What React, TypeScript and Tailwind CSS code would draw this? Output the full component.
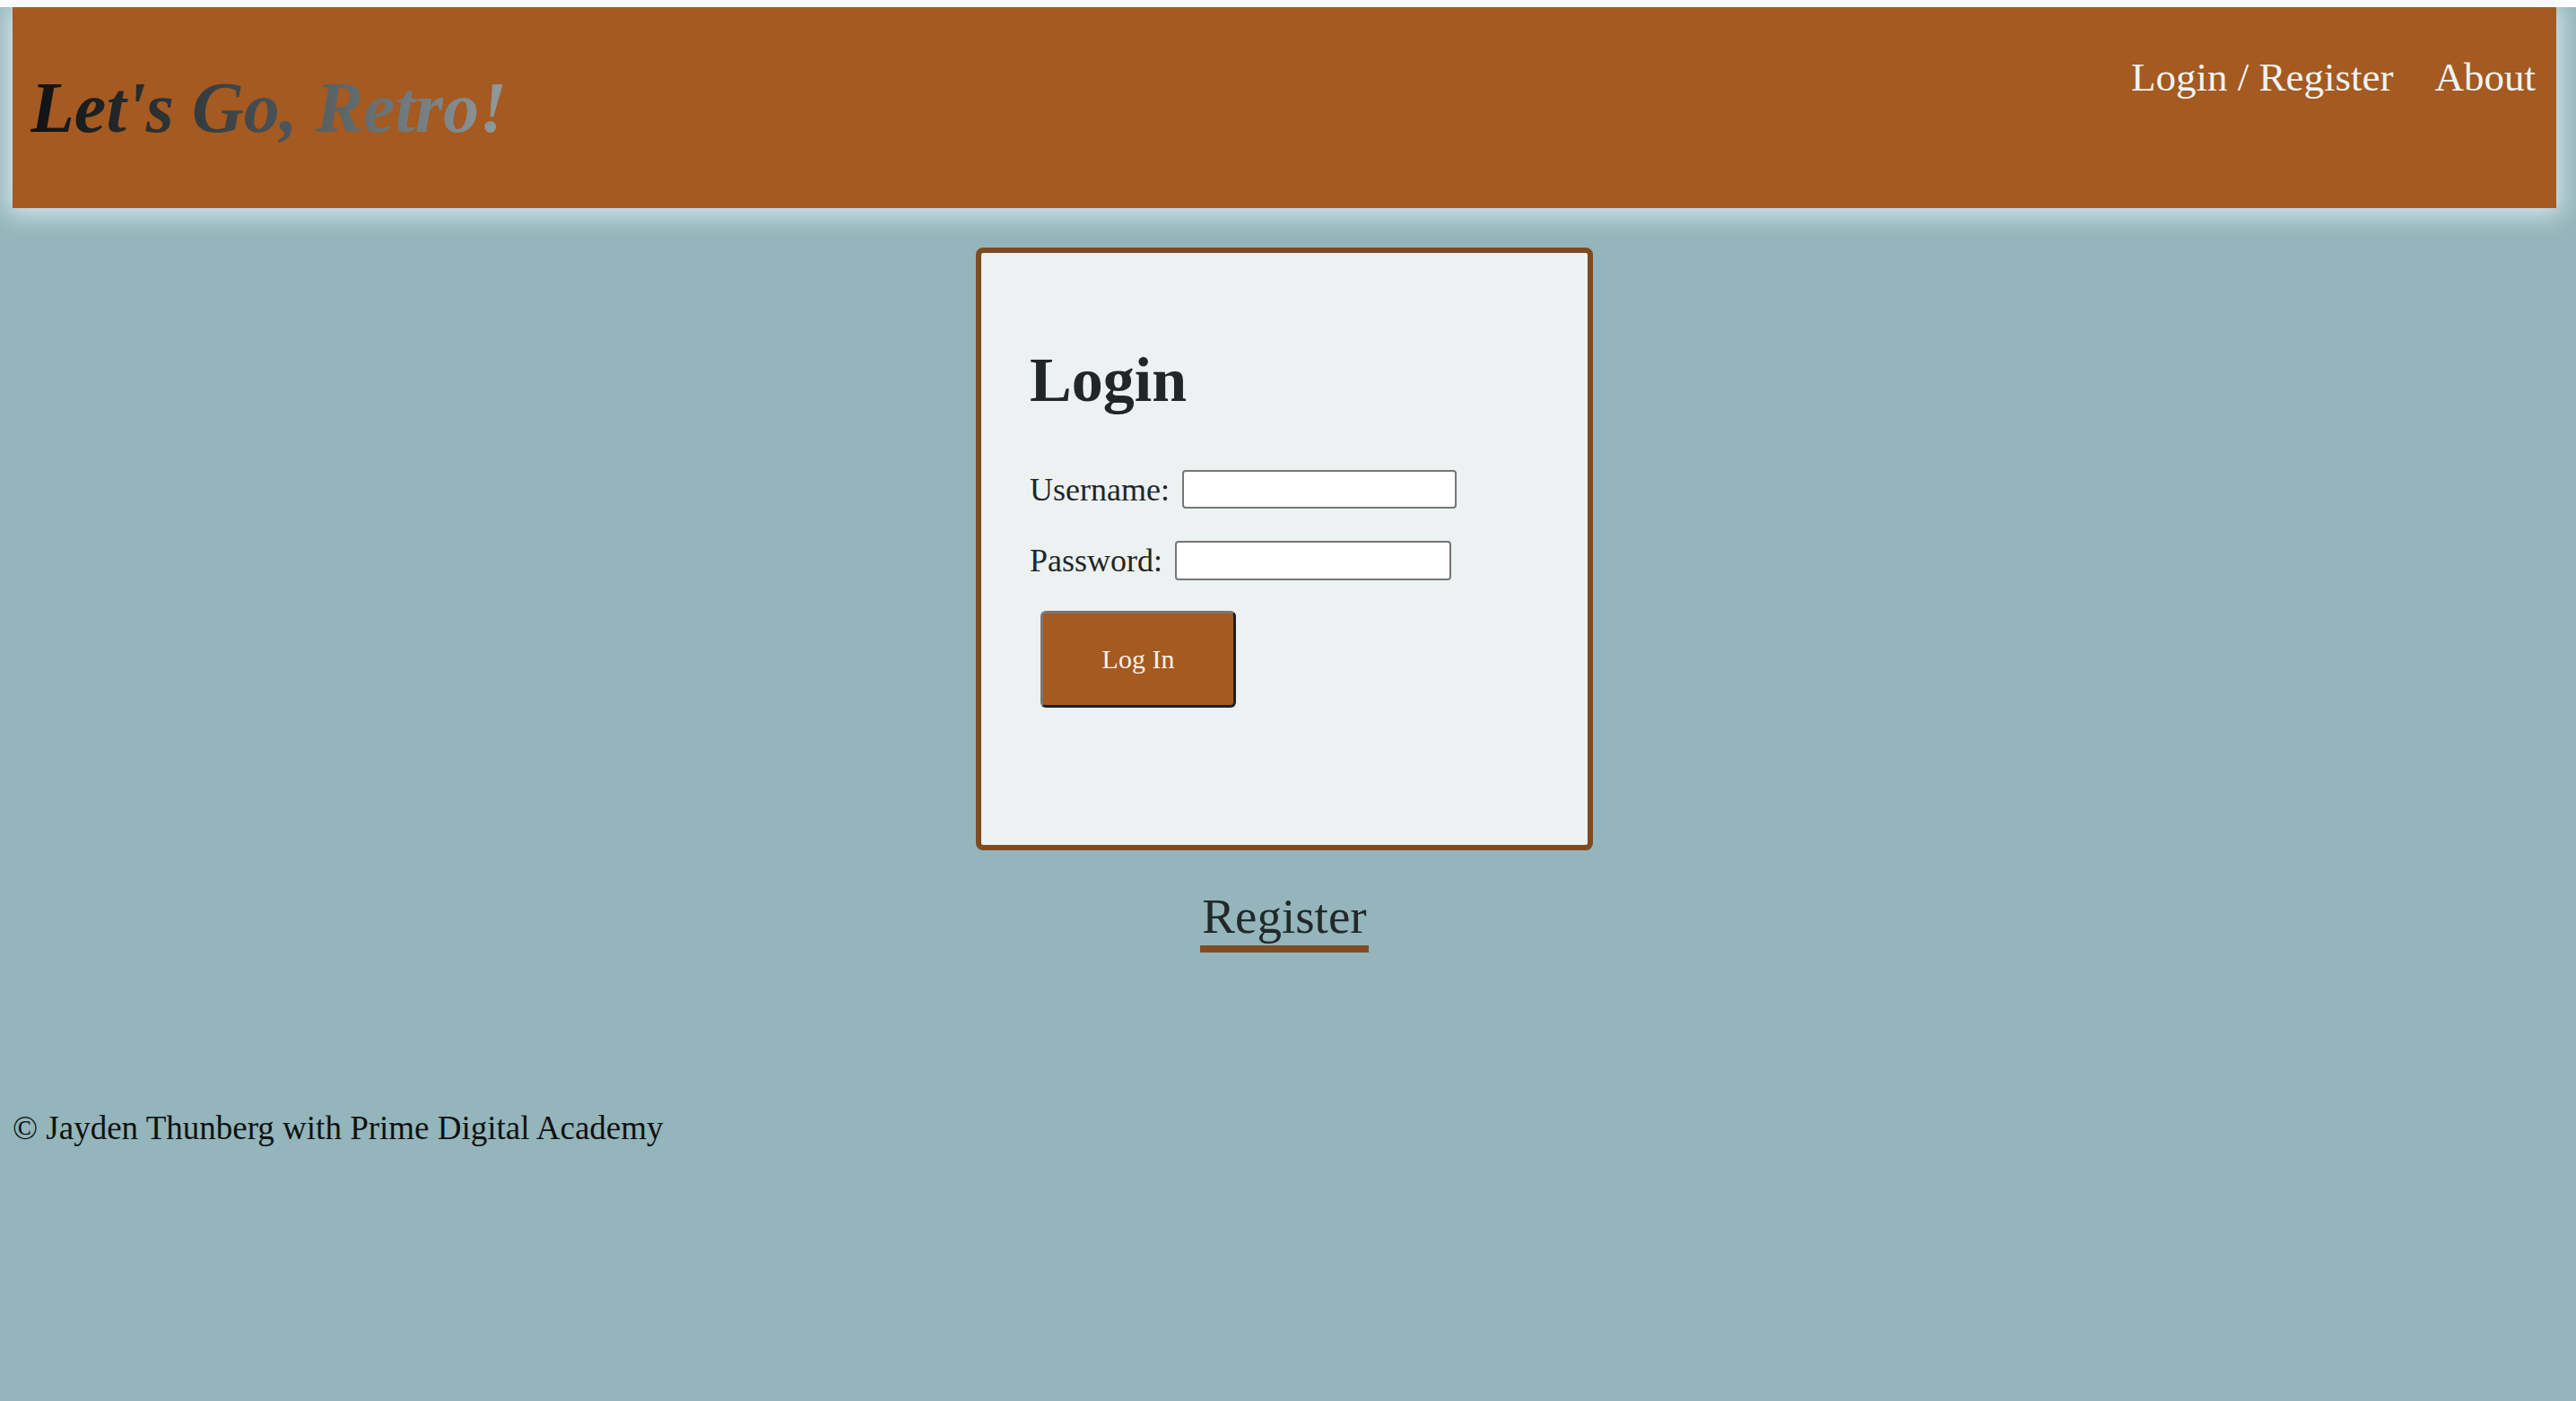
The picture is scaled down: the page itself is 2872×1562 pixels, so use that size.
import { useState } from 'react'

const serif = "font-['Liberation_Serif','Times_New_Roman',serif]"

function Header() {
  return (
    <header className="mt-[8px] ml-[14px] mr-[22px] h-[224px] bg-[#a45a20] flex justify-between shadow-[0_2px_26px_6px_rgba(232,243,246,0.8)]">
      <div className="flex items-center pl-[20px]">
        <h1 className="font-['Liberation_Serif',serif] italic font-bold text-[80px] leading-none pr-3 bg-linear-to-r from-[#0f1112] via-[#485155] to-[#959ea1] bg-clip-text text-transparent">
          Let's Go, Retro!
        </h1>
      </div>
      <nav className={`${serif} flex gap-[46px] pt-[56px] pr-[23px] text-[45px] leading-none text-[#eef4f6]`}>
        <a href="#" className="h-fit">Login / Register</a>
        <a href="#" className="h-fit">About</a>
      </nav>
    </header>
  )
}

function LoginForm() {
  const [username, setUsername] = useState('')
  const [password, setPassword] = useState('')

  return (
    <form
      className="w-[688px] border-[6px] border-[#7e4a20] rounded-[8px] bg-[#edf1f2] pt-[107px] pl-[54px] pb-[153px] text-[#212628]"
      onSubmit={(e) => e.preventDefault()}
    >
      <h2 className="font-bold text-[70px] leading-none">Login</h2>
      <div className="mt-[65px] flex items-center gap-[14px] text-[36px] leading-none">
        <label htmlFor="username">Username:</label>
        <input
          id="username"
          type="text"
          value={username}
          onChange={(e) => setUsername(e.target.value)}
          className="w-[306px] h-[43px] bg-white border-2 border-[#767676] rounded-[4px] px-2 text-[26px] outline-none"
        />
      </div>
      <div className="mt-[36px] flex items-center gap-[14px] text-[36px] leading-none">
        <label htmlFor="password">Password:</label>
        <input
          id="password"
          type="password"
          value={password}
          onChange={(e) => setPassword(e.target.value)}
          className="w-[308px] h-[44px] bg-white border-2 border-[#767676] rounded-[4px] px-2 text-[26px] outline-none"
        />
      </div>
      <button
        type="submit"
        className="mt-[34px] ml-[12px] w-[218px] h-[108px] bg-[#a45a20] text-[#f4f1ec] text-[30px] leading-none rounded-[6px] border-[3px] border-t-[#777777] border-l-[#777777] border-b-[#202020] border-r-[#202020]"
      >
        Log In
      </button>
    </form>
  )
}

export default function App() {
  return (
    <div className={`${serif} min-h-screen bg-[#93b5bb] pb-[200px]`}>
      <Header />
      <main className="mt-[44px] ml-[14px] mr-[22px] flex flex-col items-center">
        <LoginForm />
        <a
          href="#"
          className="mt-[46px] px-[2px] pb-[5px] border-b-[8px] border-[#834d21] text-[55px] leading-none text-[#232829]"
        >
          Register
        </a>
      </main>
      <footer className="mt-[177px] pl-[14px] text-[37px] leading-none text-[#111111]">
        © Jayden Thunberg with Prime Digital Academy
      </footer>
    </div>
  )
}
